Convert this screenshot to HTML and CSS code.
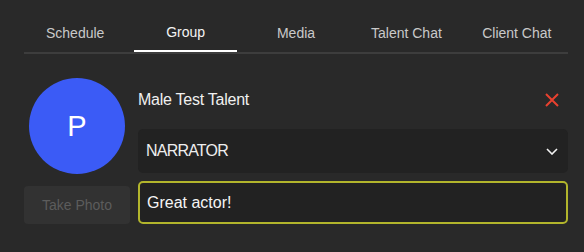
FILE: index.html
```html
<!DOCTYPE html>
<html>
<head>
<meta charset="utf-8">
<link rel="stylesheet" href="styles.css">
</head>
<body>
<nav class="tabs">
  <div class="tab">Schedule</div>
  <div class="tab active">Group</div>
  <div class="tab">Media</div>
  <div class="tab">Talent Chat</div>
  <div class="tab">Client Chat</div>
</nav>
<section class="member">
  <div class="left">
    <div class="avatar">P</div>
    <button class="photo-btn">Take Photo</button>
  </div>
  <div class="right">
    <div class="name-row">
      <span class="name">Male Test Talent</span>
      <svg class="close" width="14" height="14" viewBox="0 0 14 14"><path d="M1 1L13 13M13 1L1 13" stroke="#e8412f" stroke-width="2" fill="none"/></svg>
    </div>
    <div class="select">
      <span class="select-text">NARRATOR</span>
      <svg class="chevron" width="12" height="7" viewBox="0 0 12 7"><path d="M1 1L6 6L11 1" stroke="#f2f2f2" stroke-width="1.6" fill="none"/></svg>
    </div>
    <div class="input">Great actor!</div>
  </div>
</section>
</body>
</html>
```

FILE: styles.css
```css
html, body {
  margin: 0;
  background: #292929;
  font-family: "Liberation Sans", Arial, sans-serif;
}
.tabs {
  display: flex;
  gap: 8px;
  margin: 0 16px 0 24px;
  border-bottom: 2px solid #3d3d3d;
}
.tab {
  flex: 1;
  text-align: center;
  font-size: 14px;
  line-height: 16px;
  padding: 25px 0 9px;
  color: #c9c9c9;
  border-bottom: 2px solid transparent;
}
.tab.active {
  color: #f4f4f4;
  border-bottom-color: #ffffff;
  padding-top: 24px;
  padding-bottom: 10px;
}
.member {
  display: flex;
  align-items: flex-end;
  gap: 8px;
  margin: 24px 16px 0 24px;
}
.left {
  width: 106px;
  display: flex;
  flex-direction: column;
  align-items: center;
  gap: 12px;
}
.avatar {
  width: 96px;
  height: 96px;
  border-radius: 50%;
  background: #3b5bf6;
  color: #ffffff;
  font-size: 29px;
  display: flex;
  align-items: center;
  justify-content: center;
}
.photo-btn {
  width: 106px;
  height: 38px;
  border: none;
  border-radius: 4px;
  background: #323232;
  color: #5c5c5c;
  font-family: inherit;
  font-size: 14px;
  padding: 0;
}
.right {
  flex: 1;
  display: flex;
  flex-direction: column;
}
.name-row {
  display: flex;
  align-items: center;
  justify-content: space-between;
  height: 20px;
  padding-right: 9px;
  margin-bottom: 19px;
}
.name {
  color: #f0f0f0;
  font-size: 16px;
  letter-spacing: -0.25px;
}
.select {
  height: 44px;
  background: #222222;
  border-radius: 5px;
  display: flex;
  align-items: center;
  justify-content: space-between;
  padding: 0 10px 0 8px;
  margin-bottom: 8px;
}
.select-text {
  color: #eeeeee;
  font-size: 16px;
  letter-spacing: -0.8px;
}
.chevron {
  display: block;
}
.input {
  height: 43px;
  box-sizing: border-box;
  border: 2px solid #b2b52c;
  border-radius: 5px;
  background: #222222;
  color: #f5f5f5;
  font-size: 16px;
  padding: 0 7px;
  display: flex;
  align-items: center;
}
```
